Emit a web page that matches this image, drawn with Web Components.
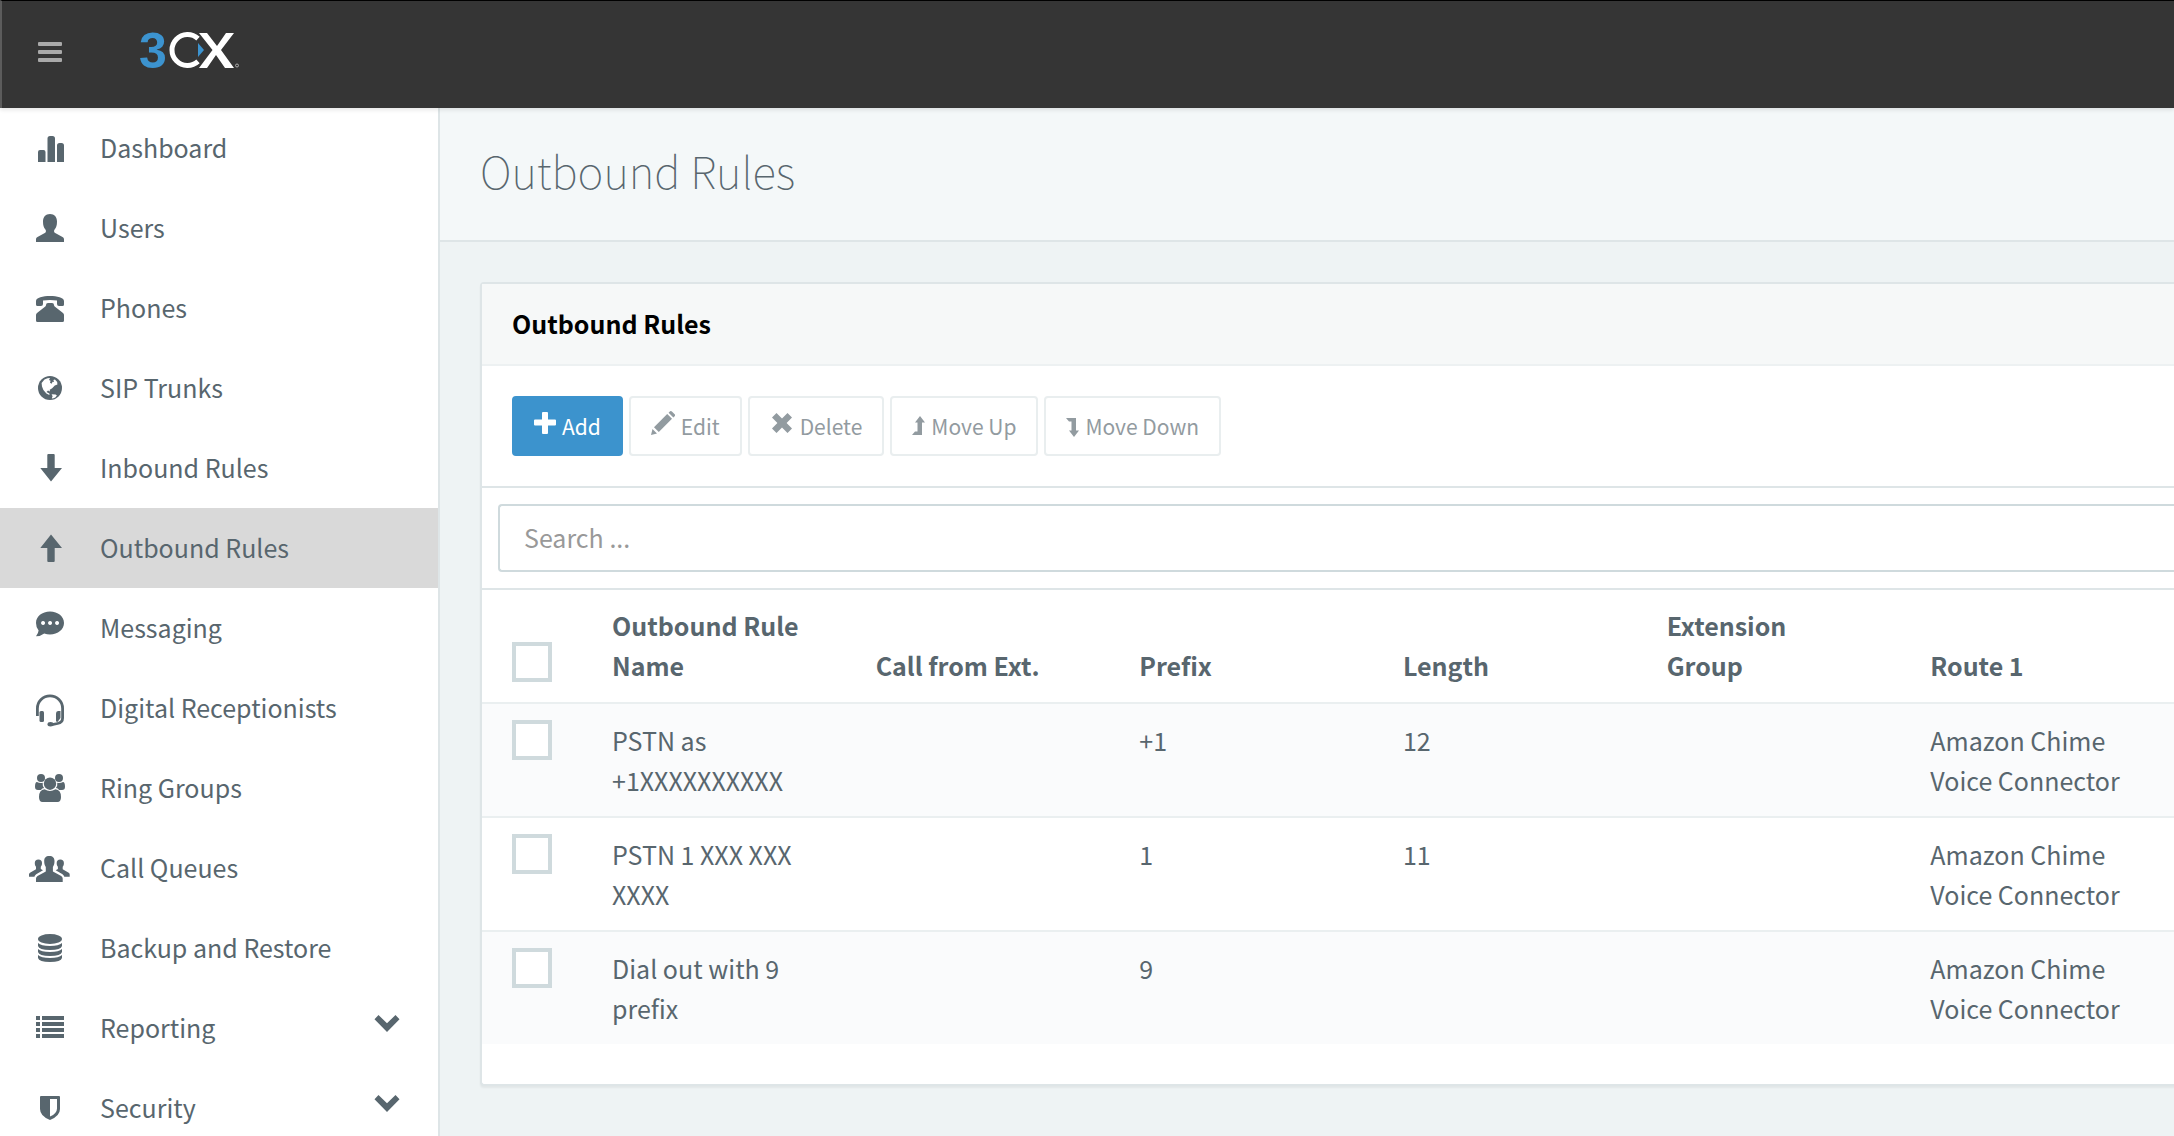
<!DOCTYPE html>
<html lang="en">
<head>
<meta charset="utf-8">
<title>Outbound Rules</title>
<style>
html, body { height: 100%; }
body { margin: 0; overflow: hidden; font: 25px/40px "Noto Sans CJK SC", "Noto Sans", sans-serif; color: #58666e; background: #eef3f4; }
</style>
</head>
<body>
<app-shell>
  <app-header slot="header"></app-header>
  <side-nav slot="nav">
    <nav-item icon="chart">Dashboard</nav-item>
    <nav-item icon="user">Users</nav-item>
    <nav-item icon="phone">Phones</nav-item>
    <nav-item icon="globe">SIP Trunks</nav-item>
    <nav-item icon="down">Inbound Rules</nav-item>
    <nav-item icon="up" active>Outbound Rules</nav-item>
    <nav-item icon="chat">Messaging</nav-item>
    <nav-item icon="headset">Digital Receptionists</nav-item>
    <nav-item icon="group">Ring Groups</nav-item>
    <nav-item icon="queue">Call Queues</nav-item>
    <nav-item icon="database">Backup and Restore</nav-item>
    <nav-item icon="list" expandable>Reporting</nav-item>
    <nav-item icon="shield" expandable>Security</nav-item>
  </side-nav>
  <page-title>Outbound Rules</page-title>
  <content-card>
    <span slot="title">Outbound Rules</span>
    <tool-button slot="tools" icon="plus" primary>Add</tool-button>
    <tool-button slot="tools" icon="pencil" disabled>Edit</tool-button>
    <tool-button slot="tools" icon="cross" disabled>Delete</tool-button>
    <tool-button slot="tools" icon="levelup" disabled>Move Up</tool-button>
    <tool-button slot="tools" icon="leveldown" disabled>Move Down</tool-button>
    <search-box></search-box>
    <rules-table></rules-table>
  </content-card>
</app-shell>

<script>
const svg = (w, h, body) => `<svg width="${w}" height="${h}" viewBox="0 0 ${w} ${h}" fill="currentColor" aria-hidden="true">${body}</svg>`;

const navIcons = {
  chart: '<path d="M10 30V20q0-2 2-2h3.500q2 0 2 2V30zM19.500 30V6.500q0-2.500 2.500-2.500h2.500q2.500 0 2.500 2.500V30zM29 30V13.500q0-2.500 2.500-2.500h2q2.500 0 2.500 2.500V30z"/>',
  user: '<path d="M22 2c-4.500 0-7 3-7 7.500 0 4 .8 6 2.400 8 1 1.300.6 3-.6 3.600L9.500 25C8.400 25.700 8 26.200 8 27.500V30h28v-2.500c0-1.300-.4-1.800-1.500-2.500l-7.300-3.900c-1.200-.6-1.600-2.300-.6-3.600 1.600-2 2.400-4 2.400-8C29 5 26.500 2 22 2z"/>',
  phone: '<path d="M8 9c0-3.500 7-5 14-5s14 1.500 14 5v3.500q0 1.500-1.500 1.500H31q-2 0-2-2V8.600q-7-1-14 0V12q0 2-2 2H9.500Q8 14 8 12.500z"/><path d="M18 13q0-2 2-2h4q2 0 2 2 0 1 1 1.800l8 6.200q1 .9 1 2v5.500q0 1.500-1.500 1.500h-25Q8 30 8 28.500V23q0-1.100 1-2l8-6.200q1-.8 1-1.800z"/>',
  globe: '<circle cx="22" cy="16" r="12"/><path fill="#fff" d="M13.600 11L16.500 7.600l3-1.400 2.500-.2-1 2 1.600.8-.6 2 1.600 1 1-2 1.400.2-.6-2.100 1.500-.3 2.300 2.400.2 2.400-2.600 1.200-2.600 2.600-2.500 1.500.3 1.800-2-1-1.500 1.400 2.400 1.300 1 1-1 .6-2.500-1.300-3-3.500-1.400-3.500zM23.600 22.200l4 .3 1.300 1.100-1.600 1.800-2.500 1.200-1-.3.800-2z"/>',
  down: '<path d="M20.300 2h5.400q1 0 1 1v13H34L23 29.500 12.300 16h7V3q0-1 1-1z"/>',
  up: '<path d="M20.300 30h5.400q1 0 1-1V16H34L23 2.500 12.300 16h7v13q0 1 1 1z"/>',
  chat: '<path fill-rule="evenodd" d="M22-.4c8 0 14 5 14 11.400s-6 11.400-14 11.400q-3 0-5.800-1Q13 24 8 24.200q2.300-2.500 2.600-5.600Q8 15.500 8 11C8 4.600 14-.4 22-.4zM15 9a2 2 0 1 0 .1 0zm7 0a2 2 0 1 0 .1 0zm7 0a2 2 0 1 0 .1 0z"/>',
  headset: '<path fill="none" stroke="currentColor" stroke-width="2.800" d="M9.400 24V16.500a12.600 12.600 0 0 1 25.200 0V26q0 4.500-5 5.500L24 32.600"/><rect x="11.500" y="19" width="4.500" height="11" rx="1.500"/><path d="M30 19h2.500v7l-3 4q-1.500 0-1.500-1.500v-7Q28 19 30 19z"/><ellipse cx="22.500" cy="32.200" rx="3" ry="2.200"/>',
  group: '<circle cx="13" cy="6" r="4"/><circle cx="31" cy="6" r="4"/><circle cx="22" cy="11.700" r="6.200"/><path d="M16.500 17.200q5.500 3.600 11 0 5.500.5 5.500 7.800 0 5-3.500 5h-15Q11 30 11 25q0-7.300 5.500-7.800zM9 10q3 1.600 5.700.7-.4 3.500 1.400 5.300-2 .2-3.200 2H10q-3 0-3-3.200Q7 10 9 10zM35 10q-3 1.600-5.700.7.400 3.500-1.400 5.300 2 .2 3.200 2H34q3 0 3-3.200Q37 10 35 10z"/>',
  queue: '<path d="M21.300 4c-3.600 0-5.100 2-5.100 5 0 3 .6 4.500 1.600 6v4.500L9.500 24Q8 25 8 26.500V30h26.700v-3.500q0-1.500-1.500-2.500l-8.300-4.500V15c1-1.500 1.600-3 1.600-6 0-3-1.600-5-5.200-5z"/><path d="M10.400 7.600c-2.400 0-3.600 1.300-3.600 3.400 0 1.800.4 2.800 1.200 3.800v2.400l-6 3.600q-1 .7-1 1.800v2.200h5.400q.3-1.600 1.800-2.600l6.800-3.900-2.200-1.200v-2.300c.8-1 1.200-2 1.200-3.800 0-2.100-1.200-3.400-3.600-3.400zM32.300 7.600c2.400 0 3.600 1.300 3.600 3.400 0 1.800-.4 2.800-1.200 3.800v2.400l6 3.600q1 .7 1 1.800v2.200h-5.400q-.3-1.600-1.800-2.600l-6.800-3.900 2.200-1.200v-2.300c-.8-1-1.200-2-1.200-3.800 0-2.100 1.200-3.400 3.600-3.400z"/>',
  database: '<ellipse cx="22" cy="7" rx="12" ry="5"/><path d="M10 11q3 3 12 3t12-3v3q-1 4-12 4t-12-4zM10 17q3 3 12 3t12-3v3q-1 4-12 4t-12-4zM10 23q3 3 12 3t12-3v3q-1 4-12 4t-12-4z"/>',
  list: '<path d="M8 4h4v4H8zm6 0h22v4H14zM8 10h4v4H8zm6 0h22v4H14zM8 16h4v4H8zm6 0h22v4H14zM8 22h4v4H8zm6 0h22v4H14z"/>',
  shield: '<path fill-rule="evenodd" d="M13 4h18q1 0 1 1v12q0 7-10 11-10-4-10-11V5q0-1 1-1zm9 3v17.500q7-3 7-8V7z"/>'
};

const toolIcons = {
  plus: svg(22, 32, '<path d="M9 2h4q1 0 1 1v6.500h7q1 0 1 1v4q0 1-1 1h-7V23q0 1-1 1H9q-1 0-1-1v-7.500H1q-1 0-1-1v-4q0-1 1-1h7V3q0-1 1-1z"/>'),
  pencil: svg(24, 32, '<path d="M0 25l1.500-6 4.500 4.500zM3 17.200L16.200 4l4.800 4.800L7.800 22zM17.600 2.700l1.500-1.400q.9-.7 1.800.1l3 3q.7.900 0 1.700l-1.500 1.500z"/>'),
  cross: svg(24, 32, '<path d="M6.500 3l5.500 5.400L17.500 3 22 7.500 16.600 13l5.400 5.500-4.500 4.500-5.500-5.400L6.500 23 2 18.500 7.400 13 2 7.500z"/>'),
  levelup: svg(13, 32, '<path d="M8 6l5 6.500h-3V25H0l3-3.500h2.500v-9H3z"/>'),
  leveldown: svg(13, 32, '<path d="M8 27l5-6.500h-3V8H0l3 3.500h2.500v9H3z"/>')
};

function define(name, render) {
  customElements.define(name, class extends HTMLElement {
    constructor() { super(); this.attachShadow({ mode: 'open' }); }
    connectedCallback() { this.shadowRoot.innerHTML = render(this); }
  });
}

define('app-shell', () => `
  <style>
    :host { display: flex; flex-direction: column; height: 100%; overflow: hidden; }
    .body { flex: 1; min-height: 0; display: flex; }
    main { flex: 1; min-width: 0; overflow: hidden; }
  </style>
  <slot name="header"></slot>
  <div class="body"><slot name="nav"></slot><main><slot></slot></main></div>`);

define('app-header', () => `
  <style>
    :host { display: flex; align-items: center; gap: 76px; box-sizing: border-box; height: 108px; padding: 0 36px 5px;
      background: #353535; border-top: 1px solid #000; border-left: 2px solid #5c5c5c; box-shadow: 0 2px 4px rgba(0,0,0,.1); z-index: 1; position: relative; }
    button { display: flex; padding: 0; border: 0; background: none; color: #a9a9a9; }
    a { display: flex; }
    svg { display: block; }
  </style>
  <button type="button" aria-label="Toggle menu">${svg(24, 20, '<rect width="24" height="4" rx="1"/><rect y="8" width="24" height="4" rx="1"/><rect y="16" width="24" height="4" rx="1"/>')}</button>
  <a href="#" aria-label="3CX">
    <svg width="102" height="72" viewBox="138 16 102 72">
      <text x="139" y="67.500" font-family="Liberation Sans, sans-serif" font-weight="700" font-size="50" fill="#3c93cf">3</text>
      <path fill="none" stroke="#fff" stroke-width="5" d="M198 38.600A15.500 15.500 0 1 0 198 61.400"/>
      <path fill="#3c93cf" d="M198 43l6 7-6 7z"/>
      <path fill="#fff" d="M199 33h8l10 13 9-13h8L221 50l13 18h-9L216 55l-9 13h-8l13.500-18z"/>
      <circle cx="237" cy="65.500" r="1.500" fill="none" stroke="#aaa"/>
    </svg>
  </a>`);

define('side-nav', () => `
  <style>
    :host { display: block; flex: 0 0 438px; background: #fff; border-right: 2px solid #dee5e7; }
    nav { display: flex; flex-direction: column; }
  </style>
  <nav aria-label="Main"><slot></slot></nav>`);

define('nav-item', el => `
  <style>
    :host { display: block; }
    a { display: flex; align-items: center; height: 80px; padding: 0 32px 0 28px; color: #58666e; text-decoration: none; }
    :host([active]) a { background: #d9d9d9; }
    svg { display: block; overflow: visible; flex: none; }
    span { flex: 1; padding: 0 0 2px 28px; white-space: nowrap; }
  </style>
  <a href="#">${svg(44, 32, navIcons[el.getAttribute('icon')])}<span><slot></slot></span>${
    el.hasAttribute('expandable') ? svg(32, 32, '<path d="M4.500 3L13 11.300 21.500 3l4 4.300L13 20 .5 7.300z"/>') : ''}</a>`);

define('page-title', () => `
  <style>
    :host { display: block; padding: 32px 40px 40px; background: #f4f8f9; border-bottom: 2px solid #dee5e7; }
    h1 { margin: 0; font-size: 44px; line-height: 60px; font-weight: 100; }
  </style>
  <h1><slot></slot></h1>`);

define('content-card', () => `
  <style>
    :host { display: block; margin: 40px -4px 0 40px; padding-bottom: 40px; background: #fff; border: 2px solid #dee5e7; border-right: 0;
      border-radius: 4px 0 0 4px; box-shadow: 0 2px 2px rgba(0,0,0,.05); }
    h2 { margin: 0; padding: 19px 30px 21px; background: #f6f8f8; border-bottom: 2px solid #edf1f2; font-size: 25px; line-height: 40px; font-weight: 700; color: #000; }
    .tools { display: flex; gap: 6px; padding: 30px; border-bottom: 2px solid #dee5e7; }
  </style>
  <h2><slot name="title"></slot></h2>
  <div class="tools"><slot name="tools"></slot></div>
  <slot></slot>`);

define('tool-button', el => `
  <style>
    :host { display: block; }
    button { display: flex; align-items: center; gap: 6px; height: 60px; padding: 0 20px; border: 2px solid #dee5e7; border-radius: 4px;
      background: #fff; color: #58666e; font: inherit; font-size: 21px; line-height: 32px; white-space: nowrap; }
    button:disabled { opacity: .65; }
    :host([primary]) button { background: #3c93cd; border-color: #3c93cd; color: #fff; }
    svg { display: block; flex: none; }
  </style>
  <button type="button" ${el.hasAttribute('disabled') ? 'disabled' : ''}>${toolIcons[el.getAttribute('icon')]}<span><slot></slot></span></button>`);

define('search-box', () => `
  <style>
    :host { display: block; padding: 16px 0 16px 16px; border-bottom: 2px solid #dee5e7; }
    input { display: block; box-sizing: border-box; width: 100%; height: 68px; padding: 0 24px 2px; border: 2px solid #cfdadd; border-right: 0;
      border-radius: 4px 0 0 4px; background: #fff; color: #58666e; font: inherit; }
    input::placeholder { color: #999; opacity: 1; }
  </style>
  <input type="search" placeholder="Search ..." aria-label="Search">`);

const columns = ['Outbound Rule Name', 'Call from Ext.', 'Prefix', 'Length', 'Extension Group', 'Route 1'];
const rules = [
  ['PSTN as +1XXXXXXXXXX', '', '+1', '12', '', 'Amazon Chime Voice Connector'],
  ['PSTN 1 XXX XXX XXXX', '', '1', '11', '', 'Amazon Chime Voice Connector'],
  ['Dial out with 9 prefix', '', '9', '', '', 'Amazon Chime Voice Connector']
];

define('rules-table', () => `
  <style>
    :host { display: block; }
    table { width: 100%; table-layout: fixed; border-collapse: separate; border-spacing: 0; }
    .check { width: 68px; padding-left: 30px; }
    th, td { padding: 16px; text-align: left; vertical-align: top; font-weight: 400; }
    thead th { vertical-align: bottom; font-weight: 700; padding: 15px 56px 17px 16px; }
    thead .check { padding: 16px 16px 20px 30px; }
    tbody :is(th, td) { border-top: 2px solid #eaeff0; }
    tbody tr:nth-child(odd) { background: #fafbfc; }
    input { appearance: none; display: block; margin: 0; box-sizing: border-box; width: 40px; height: 40px; border: 4px solid #cfdadd; background: #fff; }
  </style>
  <table>
    <thead><tr><th class="check"><input type="checkbox" aria-label="Select all rules"></th>${columns.map(c => `<th scope="col">${c}</th>`).join('')}</tr></thead>
    <tbody>${rules.map(r => `<tr><td class="check"><input type="checkbox" aria-label="Select ${r[0]}"></td>${r.map(c => `<td>${c}</td>`).join('')}</tr>`).join('')}</tbody>
  </table>`);
</script>
</body>
</html>
